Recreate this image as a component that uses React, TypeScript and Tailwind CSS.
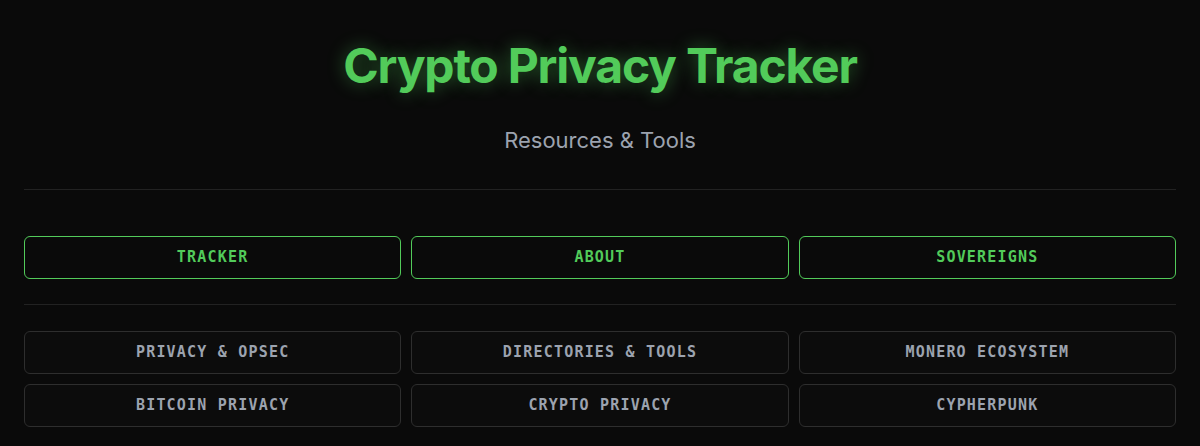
import React from 'react';

const mainNav = ['Tracker', 'About', 'Sovereigns'];
const categories = [
  'Privacy & OpSec',
  'Directories & Tools',
  'Monero Ecosystem',
  'Bitcoin Privacy',
  'Crypto Privacy',
  'Cypherpunk',
];

export default function App() {
  const [active, setActive] = React.useState<string | null>(null);

  return (
    <main className="min-h-screen bg-[#0a0a0a] px-6 font-['Inter',sans-serif]">
      {/* Header */}
      <header className="border-b border-[#222222] pt-[42px] pb-[35px] text-center">
        <h1 className="text-5xl leading-none font-bold tracking-tight text-[#52cb5a] [text-shadow:0_0_18px_rgba(82,203,90,0.45)]">
          Crypto Privacy Tracker
        </h1>
        <p className="mt-9 text-[22px] leading-7 text-[#9ca3af]">Resources &amp; Tools</p>
      </header>

      {/* Main navigation */}
      <nav className="grid grid-cols-3 gap-[10px] border-b border-[#222222] pt-[46px] pb-[25px]">
        {mainNav.map((item) => (
          <button
            key={item}
            className="h-[43px] rounded-md border-[1.5px] border-[#52cb5a] bg-transparent font-['DejaVu_Sans_Mono',monospace] text-[15px] font-bold tracking-[0.08em] text-[#52cb5a] uppercase hover:bg-[#52cb5a]/10"
          >
            {item}
          </button>
        ))}
      </nav>

      {/* Categories */}
      <section className="grid grid-cols-3 gap-x-[10px] gap-y-[10px] pt-[26px] pb-6">
        {categories.map((cat) => (
          <button
            key={cat}
            onClick={() => setActive(cat)}
            className={
              'h-[43px] rounded-md border-[1.5px] bg-[#0c0c0c] font-["DejaVu_Sans_Mono",monospace] text-[15px] font-bold tracking-[0.08em] uppercase ' +
              (active === cat ? 'border-[#52cb5a] text-[#52cb5a]' : 'border-[#2e2e2e] text-[#9ca3af]')
            }
          >
            {cat}
          </button>
        ))}
      </section>
    </main>
  );
}
